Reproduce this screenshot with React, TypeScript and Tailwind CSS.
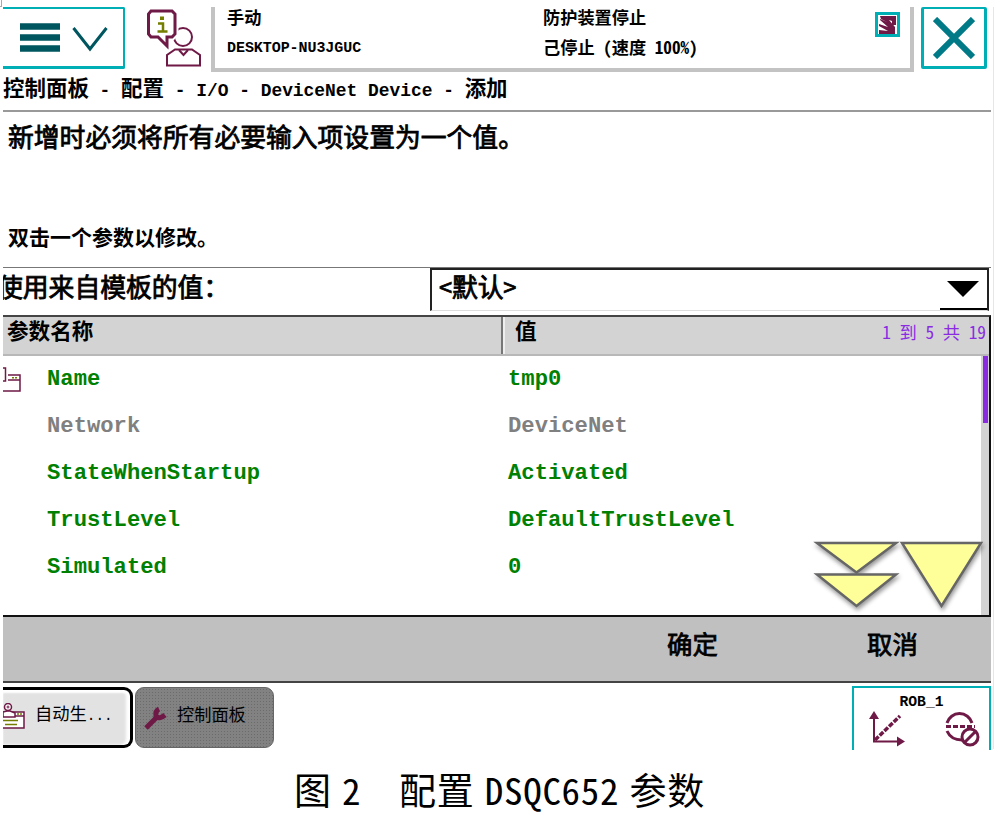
import { Fragment } from 'react';

const mono = "font-['Liberation_Mono','Noto_Sans_CJK_SC',monospace]";
const hei = "font-['Noto_Sans_Mono_CJK_SC','Noto_Sans_CJK_SC',monospace]";

const parameters = [
  { name: 'Name', value: 'tmp0', readOnly: false, icon: true },
  { name: 'Network', value: 'DeviceNet', readOnly: true, icon: false },
  { name: 'StateWhenStartup', value: 'Activated', readOnly: false, icon: false },
  { name: 'TrustLevel', value: 'DefaultTrustLevel', readOnly: false, icon: false },
  { name: 'Simulated', value: '0', readOnly: false, icon: false },
];

// Full-width glyphs take two half-width cells of the monospace grid.
function Mixed({ text }: { text: string }) {
  return (
    <>
      {text.split(/([\u4e00-\u9fff]+)/).map((part, i) =>
        i % 2 ? (
          <span key={i} className="text-[1.2em]">{part}</span>
        ) : (
          <Fragment key={i}>{part}</Fragment>
        ),
      )}
    </>
  );
}

function MenuIcon() {
  return (
    <svg width="90" height="30" viewBox="0 0 90 30" fill="none">
      <path d="M0 3.500H40M0 14.500H40M0 25.500H40" stroke="#00565f" strokeWidth="6.500" />
      <path d="M53.500 5L70 26L86.500 5" stroke="#00565f" strokeWidth="3" />
    </svg>
  );
}

function OperatorIcon() {
  return (
    <svg width="54" height="58" viewBox="0 0 54 58" fill="none" stroke="#6e1946" strokeWidth="2">
      <circle cx="36" cy="28" r="9" />
      <path d="M4 2H25L28 5V25L25 28H20V37L11 28H4L1.500 25V5Z" fill="#fff" stroke="#fff" strokeWidth="7" />
      <path d="M4 2H25L28 5V25L25 28H20V37L11 28H4L1.500 25V5Z" strokeWidth="3" />
      <path d="M20 56.500V46L28 40.500H45L53 46V56.500Z" fill="#fff" />
      <path d="M32 41L36.500 46L41 41" />
      <path d="M11 14.500H16V22M10.500 22.500H20.500" stroke="#737d00" strokeWidth="2.500" />
      <rect x="13" y="7.500" width="4" height="3.500" fill="#737d00" stroke="none" />
    </svg>
  );
}

function Header() {
  return (
    <header className="flex h-[65px] items-start">
      <button type="button" className="flex h-[62px] w-[122px] items-center rounded-r-[2px] border-2 border-b-[3px] border-l-0 border-[#00aeb5] pl-[17px]">
        <MenuIcon />
      </button>
      <div className="w-[86px] pt-[2px] pl-[22px]">
        <OperatorIcon />
      </div>
      <div className="flex h-[65px] w-[703px] border-4 border-t-0 border-[#c3c3c3] pl-3 font-bold text-black">
        <div className="w-[316px]">
          <div className={`${hei} h-[23px] text-[17.200px] leading-[19px]`}>手动</div>
          <div className={`${mono} mt-[7px] h-[24px] text-[15px] leading-[24px] tracking-[-0.06px]`}>DESKTOP-NU3JGUC</div>
        </div>
        <div className={`${hei} flex-1 text-[17.200px] whitespace-pre`}>
          <div className="h-[23px] leading-[19px]">防护装置停止</div>
          <div className="mt-[6px] h-[24px] leading-[21px]">己停止 (速度 100%)</div>
        </div>
        <div className="mt-[5px] mr-[10px] h-[25px] w-[25px] border-[3px] border-[#00aeb5]">
          <svg width="19" height="19" viewBox="0 0 19 19" fill="#6e1946">
            <path d="M2 1H18V10H14V6L11 5L17 12V19H1V15L10 16L1 11V9L10 12L2 5V4L9 7L3 4Z" />
          </svg>
        </div>
      </div>
      <button type="button" className="ml-[7px] flex h-[62px] w-[66px] items-center justify-center rounded-[2px] border-[3px] border-t-2 border-[#00aeb5]">
        <svg width="42" height="42" viewBox="0 0 42 42" stroke="#007a87" strokeWidth="6">
          <path d="M2 2L40 40M40 2L2 40" />
        </svg>
      </button>
    </header>
  );
}

function InstanceIcon() {
  return (
    <svg width="18" height="28" viewBox="0 0 18 28" fill="none" stroke="#6e1946" strokeWidth="1.500">
      <path d="M0 2H2.500V15H0M5 9H17V25H0M5 14H17" />
      <path d="M9 11.700H15" stroke="#737d00" strokeDasharray="2 1" />
    </svg>
  );
}

function ScrollArrows() {
  return (
    <svg width="176" height="76" viewBox="0 0 176 76" fill="#ffff99" stroke="#666" strokeWidth="2.500" className="drop-shadow-[1px_3px_2px_rgba(0,0,0,0.4)]">
      <path d="M4 4H83L43.500 33.500Z" />
      <path d="M4 35.500H83L43.500 67Z" />
      <path d="M89 4H168L128.500 67Z" />
    </svg>
  );
}

function ParameterTable() {
  return (
    <section className="relative h-[302px] border-t-2 border-r-2 border-b-2 border-[#111] border-t-[#444]">
      <div className={`${hei} flex h-[39px] border-b-2 border-[#b8b8b8] bg-[#d3d3d3] font-bold`}>
        <div className="w-[500px] border-r-2 border-[#777] pl-1 text-[21.600px] leading-[26px]">参数名称</div>
        <div className="flex-1 border-l-2 border-[#eee] pl-[10px] text-[21.600px] leading-[26px]">值</div>
        <div className="pr-[3px] text-[17.300px] leading-[29px] font-normal whitespace-pre text-[#8a2be2]">1 到 5 共 19</div>
      </div>
      <div className="flex">
        <div className={`${mono} flex-1 text-[22.200px] font-bold`}>
          {parameters.map((row) => (
            <div key={row.name} className={`flex h-[47px] items-center ${row.readOnly ? 'text-[#808080]' : 'text-[#008000]'}`}>
              <div className="w-[44px]">{row.icon && <InstanceIcon />}</div>
              <div className="w-[461px]">{row.name}</div>
              <div>{row.value}</div>
            </div>
          ))}
        </div>
        <div className="h-[259px] w-[8px] bg-[#d3d3d3]">
          <div className="mr-px h-[67px] border-l-2 border-[#d3d3d3] bg-[#8a2be2]" />
        </div>
      </div>
      <div className="absolute right-0 bottom-0">
        <ScrollArrows />
      </div>
    </section>
  );
}

function TaskBar() {
  return (
    <nav className="flex h-[66px] items-start pt-1">
      <button type="button" className={`${mono} flex h-[61px] w-[130px] items-center rounded-r-[9px] border-[3px] border-l-0 border-black bg-[#e2e2e2] text-[14.400px] whitespace-pre shadow-[inset_-4px_0_3px_#fff,inset_0_3px_2px_#fff]`}>
        <svg width="24" height="30" viewBox="0 0 24 30" fill="none" stroke="#6e1946" strokeWidth="1.500">
          <path d="M0 9H21V25H0" fill="#fff" />
          <path d="M12 13H21" />
          <path d="M14 11H20" stroke="#737d00" strokeDasharray="2 1" />
          <path d="M0 14V9L4 8H7L12 10V14Z" fill="#fff" />
          <circle cx="5" cy="4" r="3.500" fill="#fff" />
          <path d="M5 2.500V5.500M3.500 4H6.500" strokeWidth="1" />
          <path d="M0 17.500H15M2 21.500H14" stroke="#737d00" />
        </svg>
        <span className="ml-[8px] -translate-y-[2px]"><Mixed text="自动生..." /></span>
      </button>
      <button type="button" className={`${hei} ml-[2px] flex h-[61px] w-[139px] items-center rounded-[9px] border border-[#666] bg-[#828282] bg-[radial-gradient(#6b6b6b_0.6px,transparent_0.8px)] bg-[size:3px_3px] pl-[8px] text-[17.200px]`}>
        <svg width="24" height="24" viewBox="0 0 24 24" fill="none" stroke="#6e1946">
          <path d="M2 22L13 11" strokeWidth="5" />
          <path d="M15 3Q11 5 12 10Q15 14 21 9" strokeWidth="5" />
        </svg>
        <span className="ml-[9px] -translate-y-[4px]">控制面板</span>
      </button>
      <button type="button" className="-mt-[1px] ml-auto h-[64px] w-[139px] border-2 border-b-0 border-[#00aeb5]">
        <div className={`${mono} h-[21px] text-[14.700px] leading-[24px] font-bold`}>ROB_1</div>
        <div className="flex justify-between pr-[8px] pl-[14px]">
          <svg width="38" height="38" viewBox="0 0 38 38" fill="#6e1946" stroke="#6e1946" strokeWidth="2">
            <path d="M6 6V30.500H30" fill="none" />
            <path d="M7 29L32 5" strokeWidth="3.500" strokeDasharray="5 1.500" />
            <path d="M1 8L6 0L11 8ZM29 25.500L37 30.500L29 35.500Z" stroke="none" />
          </svg>
          <svg width="38" height="38" viewBox="0 0 38 38" fill="none" stroke="#6e1946" strokeWidth="3">
            <path d="M4 12A13 13 0 0 1 29 12M4 20Q8 29 19 29" />
            <path d="M3 15.500H32" strokeWidth="3" strokeDasharray="5 2" />
            <circle cx="27" cy="26" r="8" fill="#fff" />
            <path d="M22 31L32 21" />
          </svg>
        </div>
      </button>
    </nav>
  );
}

export default function App() {
  return (
    <div className="h-[815px] w-[997px] overflow-hidden bg-white text-black">
      <div className="h-[7px] w-[2px] border-r border-b border-[#aaa]" />
      <div className="ml-[3px] w-[991px] border-r border-[#e6e6e6] pr-[2px]">
        <Header />
        <div className={`${mono} h-[38px] overflow-hidden text-[17.900px] leading-[37px] font-bold whitespace-pre`}>
          <Mixed text="控制面板 - 配置 - I/O - DeviceNet Device - 添加" />
        </div>
        <div className={`${hei} h-[157px] border-t-2 border-[#999] pl-[5px]`}>
          <p className="h-[106px] text-[25.800px] leading-[48px] [-webkit-text-stroke:0.8px]">新增时必须将所有必要输入项设置为一个值。</p>
          <p className="text-[21px] leading-[36px] font-bold">双击一个参数以修改。</p>
        </div>
        <div className={`${hei} flex h-[48px] border-t border-[#777] text-[25.800px] leading-[36px] [-webkit-text-stroke:0.8px]`}>
          <div className="w-[427px] overflow-hidden"><span className="-ml-[6px]">使用来自模板的值：</span></div>
          <div className="flex h-[43px] w-[559px] justify-between border-2 border-b border-[#222] border-b-[#ddd] pl-[7px] leading-[32px]">
            <span>&lt;默认&gt;</span>
            <div className="w-[47px] border-b-2 border-black pt-[11px] pl-[7px]">
              <svg width="32" height="16" viewBox="0 0 32 16"><path d="M0 0H32L16 16Z" /></svg>
            </div>
          </div>
        </div>
        <ParameterTable />
        <footer className={`${hei} flex h-[66px] border-b-2 border-[#444] bg-[#c0c0c0] pl-[664px] text-[25.400px] [-webkit-text-stroke:0.8px]`}>
          <button type="button" className="h-[53px] w-[200px] text-left">确定</button>
          <button type="button" className="h-[53px]">取消</button>
        </footer>
        <TaskBar />
      </div>
      <p className="mt-[18px] ml-[294px] text-[37px] leading-[44px] tracking-[0.700px] [word-spacing:-8.800px] whitespace-pre font-['Noto_Sans_Mono_CJK_SC','Noto_Sans_CJK_SC',monospace]">图 2　配置 DSQC652 参数</p>
    </div>
  );
}
